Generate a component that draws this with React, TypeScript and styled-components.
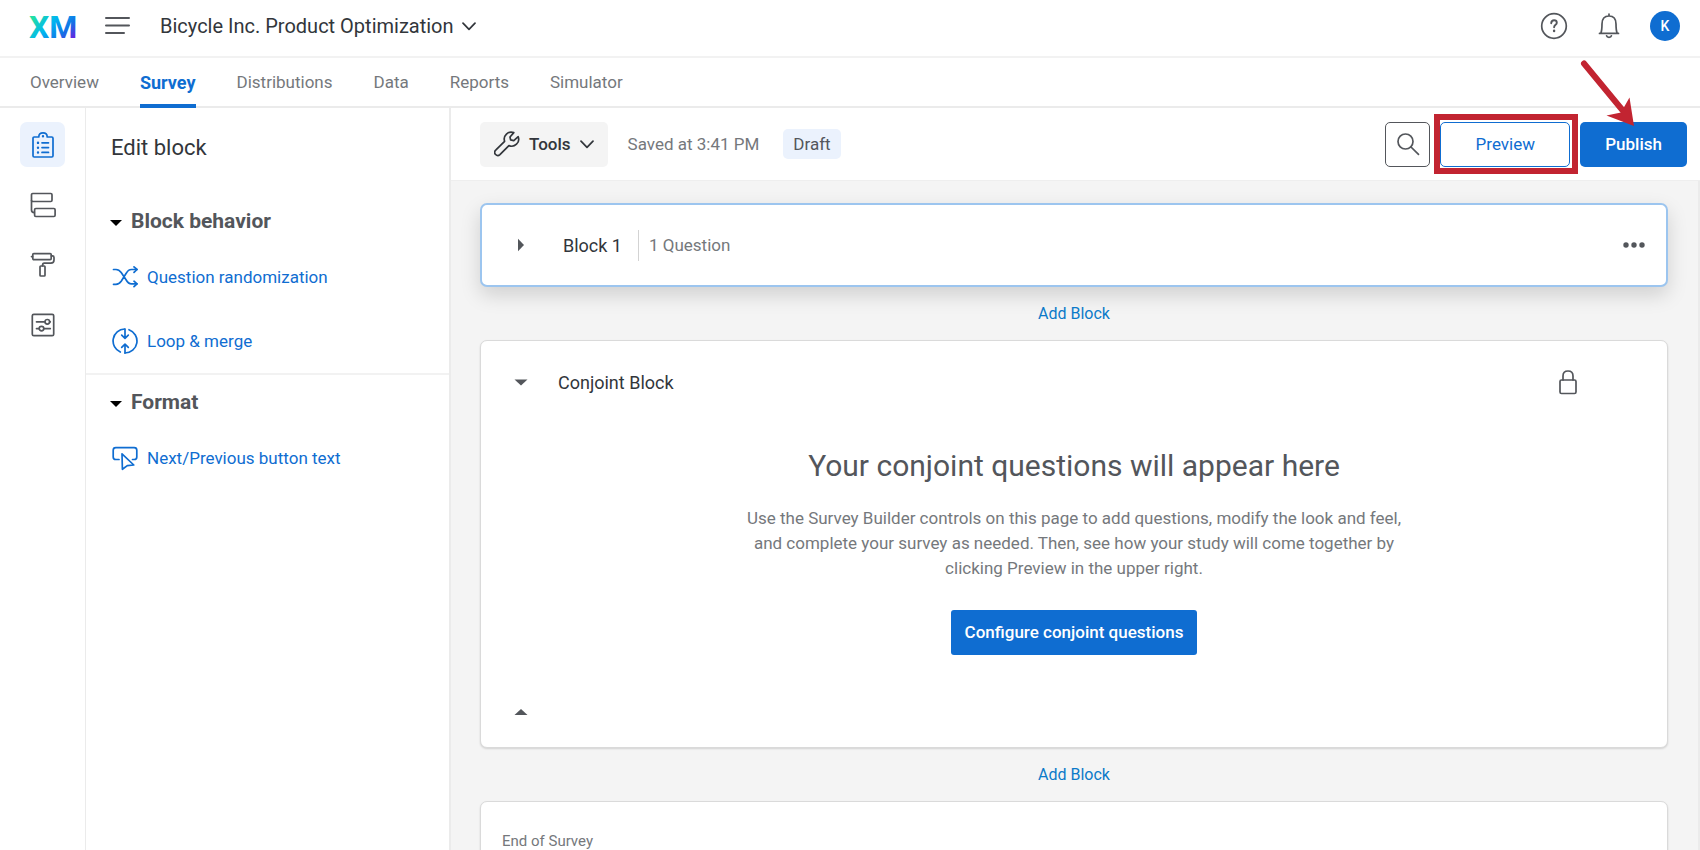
import React from 'react';
import styled, { createGlobalStyle, css } from 'styled-components';

const color = {
  blue: '#0f6dd1',
  blueSoft: '#ebf2fd',
  focus: '#9cc5ef',
  ink: '#32363b',
  dark: '#53565b',
  muted: '#75787c',
  line: '#ebebeb',
  canvas: '#f4f4f4',
  red: '#c22431',
};

const GlobalStyle = createGlobalStyle`
  *, *::before, *::after { box-sizing: border-box; }
  body {
    margin: 0;
    background: #fff;
    color: ${color.ink};
    font-family: Roboto, "Liberation Sans", sans-serif;
    font-size: 17px;
    line-height: 25px;
  }
  button {
    margin: 0;
    padding: 0;
    border: 0;
    background: none;
    color: inherit;
    font: inherit;
    cursor: pointer;
  }
  a { color: inherit; text-decoration: none; }
  h1, h2, h3, p { margin: 0; font-weight: 400; }
  svg { display: block; flex: none; }
`;

const Shell = styled.div`
  display: flex;
  flex-direction: column;
  height: 100vh;
  overflow: hidden;
`;

const TopBar = styled.header`
  display: flex;
  align-items: center;
  flex: none;
  height: 58px;
  padding: 0 20px 4px 29px;
  border-bottom: 2px solid #f2f2f2;
`;

const MenuButton = styled.button`
  margin: 0 30px 0 26px;
  color: ${color.dark};
`;

const ProjectButton = styled.button`
  display: flex;
  align-items: center;
  gap: 8px;
  font-size: 20px;
`;

const Account = styled.div`
  display: flex;
  align-items: center;
  gap: 30px;
  margin-left: auto;
  color: ${color.dark};
`;

const Avatar = styled.button`
  width: 30px;
  height: 30px;
  border-radius: 50%;
  background: ${color.blue};
  color: #fff;
  font-size: 14px;
  font-weight: 500;
`;

const Tabs = styled.nav`
  display: flex;
  flex: none;
  gap: 41px;
  height: 50px;
  padding-left: 30px;
  border-bottom: 2px solid ${color.line};
`;

const Tab = styled.a<{ $active?: boolean }>`
  height: 50px;
  line-height: 49px;
  color: ${color.muted};
  ${({ $active }) =>
    $active &&
    css`
      border-bottom: 4px solid ${color.blue};
      color: ${color.blue};
      font-size: 18px;
      font-weight: 700;
    `}
`;

const Workspace = styled.div`
  display: flex;
  flex: 1;
  min-height: 0;
`;

const Rail = styled.nav`
  display: flex;
  flex: none;
  flex-direction: column;
  align-items: center;
  gap: 15px;
  width: 86px;
  padding-top: 14px;
  border-right: 1px solid ${color.line};
`;

const RailButton = styled.button<{ $active?: boolean }>`
  display: grid;
  place-items: center;
  width: 45px;
  height: 45px;
  border-radius: 7px;
  background: ${({ $active }) => ($active ? color.blueSoft : 'transparent')};
  color: ${({ $active }) => ($active ? color.blue : color.dark)};
`;

const Panel = styled.aside`
  flex: none;
  width: 365px;
  border-right: 2px solid ${color.line};
`;

const PanelTitle = styled.h1`
  margin-bottom: 7px;
  padding-left: 25px;
  font-size: 22px;
  line-height: 79px;
`;

const Section = styled.section`
  padding: 7px 0 0 24px;
  & + & { border-top: 2px solid #f2f2f2; }
`;

const SectionToggle = styled.button`
  display: flex;
  align-items: center;
  gap: 9px;
  height: 40px;
  margin-bottom: 4px;
  color: ${color.dark};
  font-size: 21px;
  font-weight: 700;
`;

const SectionAction = styled.button`
  display: flex;
  align-items: center;
  gap: 9px;
  height: 64px;
  padding-left: 2px;
  color: ${color.blue};
`;

const Main = styled.main`
  display: flex;
  flex: 1;
  flex-direction: column;
  min-width: 0;
`;

const Toolbar = styled.div`
  display: flex;
  align-items: center;
  flex: none;
  height: 73px;
  padding: 0 13px 0 29px;
  border-bottom: 1px solid #eeeeee;
`;

const ToolsButton = styled.button`
  display: flex;
  align-items: center;
  gap: 9px;
  height: 45px;
  padding: 0 14px;
  border-radius: 5px;
  background: ${color.canvas};
  font-weight: 500;
`;

const SavedNote = styled.span`
  margin: 0 24px 0 20px;
  color: ${color.muted};
`;

const DraftBadge = styled.span`
  padding: 0 10px;
  border-radius: 5px;
  background: ${color.blueSoft};
  color: ${color.dark};
  line-height: 30px;
`;

const ToolbarActions = styled.div`
  display: flex;
  gap: 10px;
  margin-left: auto;
`;

const SearchButton = styled.button`
  display: grid;
  place-items: center;
  width: 45px;
  height: 45px;
  border: 1px solid ${color.dark};
  border-radius: 5px;
  color: ${color.dark};
`;

const Anchor = styled.div`
  position: relative;
`;

const RedFrame = styled.div`
  position: absolute;
  inset: -8px -8px -7px -6px;
  border: 6px solid ${color.red};
  pointer-events: none;
`;

const ArrowSvg = styled.svg`
  position: absolute;
  top: -64px;
  left: 0;
  pointer-events: none;
`;

const OutlineButton = styled.button`
  width: 130px;
  height: 45px;
  border: 1px solid ${color.blue};
  border-radius: 5px;
  color: ${color.blue};
`;

const SolidButton = styled.button<{ $wide?: boolean }>`
  height: 45px;
  padding: 0 ${({ $wide }) => ($wide ? 14 : 25)}px;
  border-radius: ${({ $wide }) => ($wide ? 3 : 5)}px;
  background: ${color.blue};
  color: #fff;
  font-weight: 500;
`;

const Canvas = styled.div`
  flex: 1;
  min-height: 0;
  overflow-y: auto;
  padding: 22px 30px 40px 29px;
  border-right: 2px solid ${color.line};
  background: ${color.canvas};
  scrollbar-width: none;
`;

const Card = styled.section<{ $selected?: boolean }>`
  border: 1px solid #dadada;
  border-radius: 7px;
  background: #fff;
  box-shadow: 0 1px 2px rgba(0, 0, 0, 0.14);
  ${({ $selected }) =>
    $selected &&
    css`
      border: 2px solid ${color.focus};
      box-shadow: 0 8px 20px rgba(0, 0, 0, 0.15);
    `}
`;

const BlockHeader = styled.div<{ $collapsed?: boolean }>`
  display: flex;
  align-items: center;
  height: ${({ $collapsed }) => ($collapsed ? 80 : 82)}px;
  padding: ${({ $collapsed }) => ($collapsed ? '0 20px 0 32px' : '0 90px 0 33px')};
  color: ${color.dark};
`;

const BlockName = styled.h2<{ $indent?: boolean }>`
  margin-left: ${({ $indent }) => ($indent ? 35 : 30)}px;
  color: ${color.ink};
  font-size: 18px;
`;

const QuestionCount = styled.span`
  margin-left: 16px;
  padding-left: 10px;
  border-left: 1px solid #d3d3d3;
  color: ${color.muted};
  line-height: 31px;
`;

const EndSlot = styled.div`
  display: flex;
  margin-left: auto;
`;

const AddRow = styled.div`
  display: grid;
  place-items: center;
  height: 53px;
`;

const AddBlock = styled.button`
  color: #0b7ac9;
  font-size: 16px;
`;

const Intro = styled.div`
  display: flex;
  flex-direction: column;
  align-items: center;
  padding: 23px 20px 22px;
  text-align: center;
`;

const IntroTitle = styled.h3`
  color: ${color.dark};
  font-size: 30px;
  line-height: 40px;
`;

const IntroText = styled.p`
  max-width: 680px;
  margin: 20px 0 29px;
  color: ${color.muted};
`;

const BlockFooter = styled.div`
  display: flex;
  align-items: center;
  height: 70px;
  padding-left: 33px;
  color: ${color.dark};
`;

const EndCard = styled(Card)`
  padding: 27px 21px 40px;
  color: ${color.muted};
  font-size: 15px;
`;

type IconProps = { w: number; h: number; sw?: number; children: React.ReactNode };
const Icon = ({ w, h, sw = 1.7, children }: IconProps) => (
  <svg
    width={w}
    height={h}
    viewBox={`0 0 ${w} ${h}`}
    fill="none"
    stroke="currentColor"
    strokeWidth={sw}
    strokeLinecap="round"
    strokeLinejoin="round"
    aria-hidden="true"
  >
    {children}
  </svg>
);

const Logo = () => (
  <svg width="50" height="40" viewBox="0 0 50 40" role="img" aria-label="XM">
    <defs>
      <linearGradient id="xm" gradientUnits="userSpaceOnUse" x1="6" y1="4" x2="43" y2="38">
        <stop offset="0.08" stopColor="#22dfa5" />
        <stop offset="0.42" stopColor="#00b6f0" />
        <stop offset="0.72" stopColor="#1273e6" />
        <stop offset="0.96" stopColor="#6a1fe0" />
      </linearGradient>
    </defs>
    <text x="0" y="32" fill="url(#xm)" fontFamily="Roboto, sans-serif" fontWeight="700" fontSize="32">
      XM
    </text>
  </svg>
);

const Chevron = () => (
  <Icon w={14} h={14}>
    <path d="M1 4.2 7 10.4 13 4.2" />
  </Icon>
);

const Caret = ({ dir }: { dir: 'up' | 'down' | 'right' }) => (
  <svg width="14" height="14" viewBox="0 0 14 14" fill="currentColor" aria-hidden="true">
    {dir === 'down' && <path d="M.5 4.5h13L7 10.5z" />}
    {dir === 'up' && <path d="M.5 10h13L7 4z" />}
    {dir === 'right' && <path d="M4 .8v12.4L10 7z" />}
  </svg>
);

const SectionCaret = () => (
  <svg width="12" height="12" viewBox="0 0 12 12" fill="#000" aria-hidden="true">
    <path d="M0 5h12L6 11z" />
  </svg>
);

const ClipboardIcon = () => (
  <Icon w={24} h={28}>
    <path d="M7.8 6H3.2Q2 6 2 7.2v17.6Q2 26 3.2 26h17.6q1.2 0 1.2-1.2V7.2Q22 6 20.800 6h-4.600q0-4.200-4.200-4.200T7.800 6Z" />
    <path d="M12 5.2v.1M7 11.8v.1M7 16.6v.1M7 21.4v.1" strokeWidth="2.4" />
    <path d="M11 11.8h6.5M11 16.6h6.5M11 21.4h6.5" />
  </Icon>
);

const FlowIcon = () => (
  <Icon w={26} h={26}>
    <rect x="1.5" y="1.5" width="20.5" height="8" rx="1.2" />
    <rect x="4.6" y="16.5" width="20.5" height="8" rx="1.2" />
    <path d="M1.500 8.500v9.500q0 2.500 2.800 2.700" />
  </Icon>
);

const RollerIcon = () => (
  <Icon w={25} h={25}>
    <rect x="2.8" y="1.6" width="18.4" height="6" rx="1" />
    <path d="M1.500 4.600h1M21.400 3.800h1q1.600 0 1.600 1.600v2.600q0 3.200-3.200 3.200h-6.500q-1.800 0-1.800 2.600" />
    <rect x="10" y="14" width="5" height="10" rx=".8" />
  </Icon>
);

const OptionsIcon = () => (
  <Icon w={24} h={24}>
    <rect x="1.3" y="1.3" width="21.4" height="21.4" rx="1.5" />
    <path d="M5.500 8.800h8M18.800 8.800h.5M5.500 15.600h2.500M13 15.600h6.300" />
    <circle cx="16.3" cy="8.8" r="2.3" />
    <circle cx="10.5" cy="15.6" r="2.3" />
  </Icon>
);

const ShuffleIcon = () => (
  <Icon w={26} h={22}>
    <path d="M1.500 3.500H4q3 0 5.200 3l5 7.500q2 3.800 5.300 3.800H25M1.500 18.300H4q3 0 5.200-3l5-8q2-3.800 5.300-3.800H25" />
    <path d="M22 .9 25 3.500l-3 2.800M22 15.200l3 2.600-3 2.900" />
  </Icon>
);

const LoopIcon = () => (
  <Icon w={26} h={26}>
    <path d="M12.600 1A12 12 0 0 0 8.300 24M17 1.700A12 12 0 0 1 13 25" />
    <path d="M13 1v9M9.700 7.200 13 10.300l3.300-3.100M13 25v-8.500M9.700 19.300 13 16.200l3.300 3.100" />
  </Icon>
);

const ButtonTextIcon = () => (
  <Icon w={26} h={26}>
    <path d="M7 14.500H3.800Q1.200 14.500 1.200 12V5.200q0-2.600 2.600-2.600h18.400q2.600 0 2.600 2.600V12q0 2.500-2.600 2.500H20.500" />
    <path d="M10 8.800 21.800 20 15.300 20.600 10.400 24.300Z" />
  </Icon>
);

const WrenchIcon = () => (
  <Icon w={26} h={26}>
    <path d="M19.800 1.600A7 7 0 0 0 10.600 10.300L1.700 19.200a2.900 2.900 0 0 0 4.200 4.400L14.900 14.600A7 7 0 0 0 24.200 5.700L19.800 9.600 16.600 8.900 16 6Z" />
  </Icon>
);

const SearchIcon = () => (
  <Icon w={24} h={24}>
    <circle cx="9.5" cy="9.5" r="7.5" />
    <path d="m15 15 7.500 7.300" />
  </Icon>
);

const HelpIcon = () => (
  <Icon w={28} h={28}>
    <circle cx="14" cy="14" r="12.3" />
    <path d="M11.200 11.200q.3-2.900 2.900-2.900t2.700 2.400c0 2.200-2.700 2-2.700 4.600" strokeWidth="1.9" />
    <path d="M14.100 18.800v.2" strokeWidth="2.4" />
  </Icon>
);

const BellIcon = () => (
  <Icon w={22} h={26}>
    <path d="M11 1v1.600M2.800 20.400Q4 17.500 4 11q0-8 7-8t7 8q0 6.500 1.200 9.400M1.500 20.400h19M8.600 22.800Q9 24.300 11 24.300t2.400-1.500" />
  </Icon>
);

const LockIcon = () => (
  <Icon w={18} h={26}>
    <rect x="1" y="11" width="16" height="13.5" rx="1.5" />
    <path d="M4 11V7q0-5 5-5t5 5v4" />
  </Icon>
);

const DotsIcon = () => (
  <svg width="24" height="24" viewBox="0 0 24 24" fill="currentColor" aria-hidden="true">
    <circle cx="4" cy="12" r="2.7" />
    <circle cx="12" cy="12" r="2.7" />
    <circle cx="20" cy="12" r="2.7" />
  </svg>
);

const PublishArrow = () => (
  <ArrowSvg width="60" height="72" viewBox="0 0 60 72" aria-hidden="true">
    <path d="M4 5.500 44 54" stroke={color.red} strokeWidth="6" strokeLinecap="round" />
    <path d="M54 68 26.500 57.500 41 54.500 49.500 39.500Z" fill={color.red} />
  </ArrowSvg>
);

const tabs = ['Overview', 'Survey', 'Distributions', 'Data', 'Reports', 'Simulator'];

const railItems = [
  { label: 'Builder', icon: <ClipboardIcon /> },
  { label: 'Survey flow', icon: <FlowIcon /> },
  { label: 'Look and feel', icon: <RollerIcon /> },
  { label: 'Survey options', icon: <OptionsIcon /> },
];

const sections = [
  {
    title: 'Block behavior',
    actions: [
      { label: 'Question randomization', icon: <ShuffleIcon /> },
      { label: 'Loop & merge', icon: <LoopIcon /> },
    ],
  },
  {
    title: 'Format',
    actions: [{ label: 'Next/Previous button text', icon: <ButtonTextIcon /> }],
  },
];

const AddBlockRow = () => (
  <AddRow>
    <AddBlock type="button">Add Block</AddBlock>
  </AddRow>
);

export default function App() {
  return (
    <Shell>
      <GlobalStyle />
      <TopBar>
        <Logo />
        <MenuButton type="button" aria-label="Menu">
          <Icon w={25} h={20} sw={2}>
            <path d="M1 2h23M1 9.500h23M1 17h18" />
          </Icon>
        </MenuButton>
        <ProjectButton type="button">
          Bicycle Inc. Product Optimization
          <Chevron />
        </ProjectButton>
        <Account>
          <button type="button" aria-label="Help">
            <HelpIcon />
          </button>
          <button type="button" aria-label="Notifications">
            <BellIcon />
          </button>
          <Avatar type="button">K</Avatar>
        </Account>
      </TopBar>
      <Tabs>
        {tabs.map((name) => (
          <Tab key={name} href="#" $active={name === 'Survey'}>
            {name}
          </Tab>
        ))}
      </Tabs>
      <Workspace>
        <Rail>
          {railItems.map(({ label, icon }, i) => (
            <RailButton key={label} type="button" aria-label={label} $active={i === 0}>
              {icon}
            </RailButton>
          ))}
        </Rail>
        <Panel>
          <PanelTitle>Edit block</PanelTitle>
          {sections.map(({ title, actions }) => (
            <Section key={title}>
              <SectionToggle type="button">
                <SectionCaret />
                {title}
              </SectionToggle>
              {actions.map(({ label, icon }) => (
                <SectionAction key={label} type="button">
                  {icon}
                  {label}
                </SectionAction>
              ))}
            </Section>
          ))}
        </Panel>
        <Main>
          <Toolbar>
            <ToolsButton type="button">
              <WrenchIcon />
              Tools
              <Chevron />
            </ToolsButton>
            <SavedNote>Saved at 3:41 PM</SavedNote>
            <DraftBadge>Draft</DraftBadge>
            <ToolbarActions>
              <SearchButton type="button" aria-label="Search">
                <SearchIcon />
              </SearchButton>
              <Anchor>
                <OutlineButton type="button">Preview</OutlineButton>
                <RedFrame />
              </Anchor>
              <Anchor>
                <SolidButton type="button">Publish</SolidButton>
                <PublishArrow />
              </Anchor>
            </ToolbarActions>
          </Toolbar>
          <Canvas>
            <Card $selected>
              <BlockHeader $collapsed>
                <button type="button" aria-label="Expand block">
                  <Caret dir="right" />
                </button>
                <BlockName $indent>Block 1</BlockName>
                <QuestionCount>1 Question</QuestionCount>
                <EndSlot>
                  <button type="button" aria-label="Block options">
                    <DotsIcon />
                  </button>
                </EndSlot>
              </BlockHeader>
            </Card>
            <AddBlockRow />
            <Card>
              <BlockHeader>
                <button type="button" aria-label="Collapse block">
                  <Caret dir="down" />
                </button>
                <BlockName>Conjoint Block</BlockName>
                <EndSlot>
                  <LockIcon />
                </EndSlot>
              </BlockHeader>
              <Intro>
                <IntroTitle>Your conjoint questions will appear here</IntroTitle>
                <IntroText>
                  Use the Survey Builder controls on this page to add questions, modify the look and
                  feel, and complete your survey as needed. Then, see how your study will come
                  together by clicking Preview in the upper right.
                </IntroText>
                <SolidButton type="button" $wide>
                  Configure conjoint questions
                </SolidButton>
              </Intro>
              <BlockFooter>
                <button type="button" aria-label="Collapse block">
                  <Caret dir="up" />
                </button>
              </BlockFooter>
            </Card>
            <AddBlockRow />
            <EndCard>End of Survey</EndCard>
          </Canvas>
        </Main>
      </Workspace>
    </Shell>
  );
}
